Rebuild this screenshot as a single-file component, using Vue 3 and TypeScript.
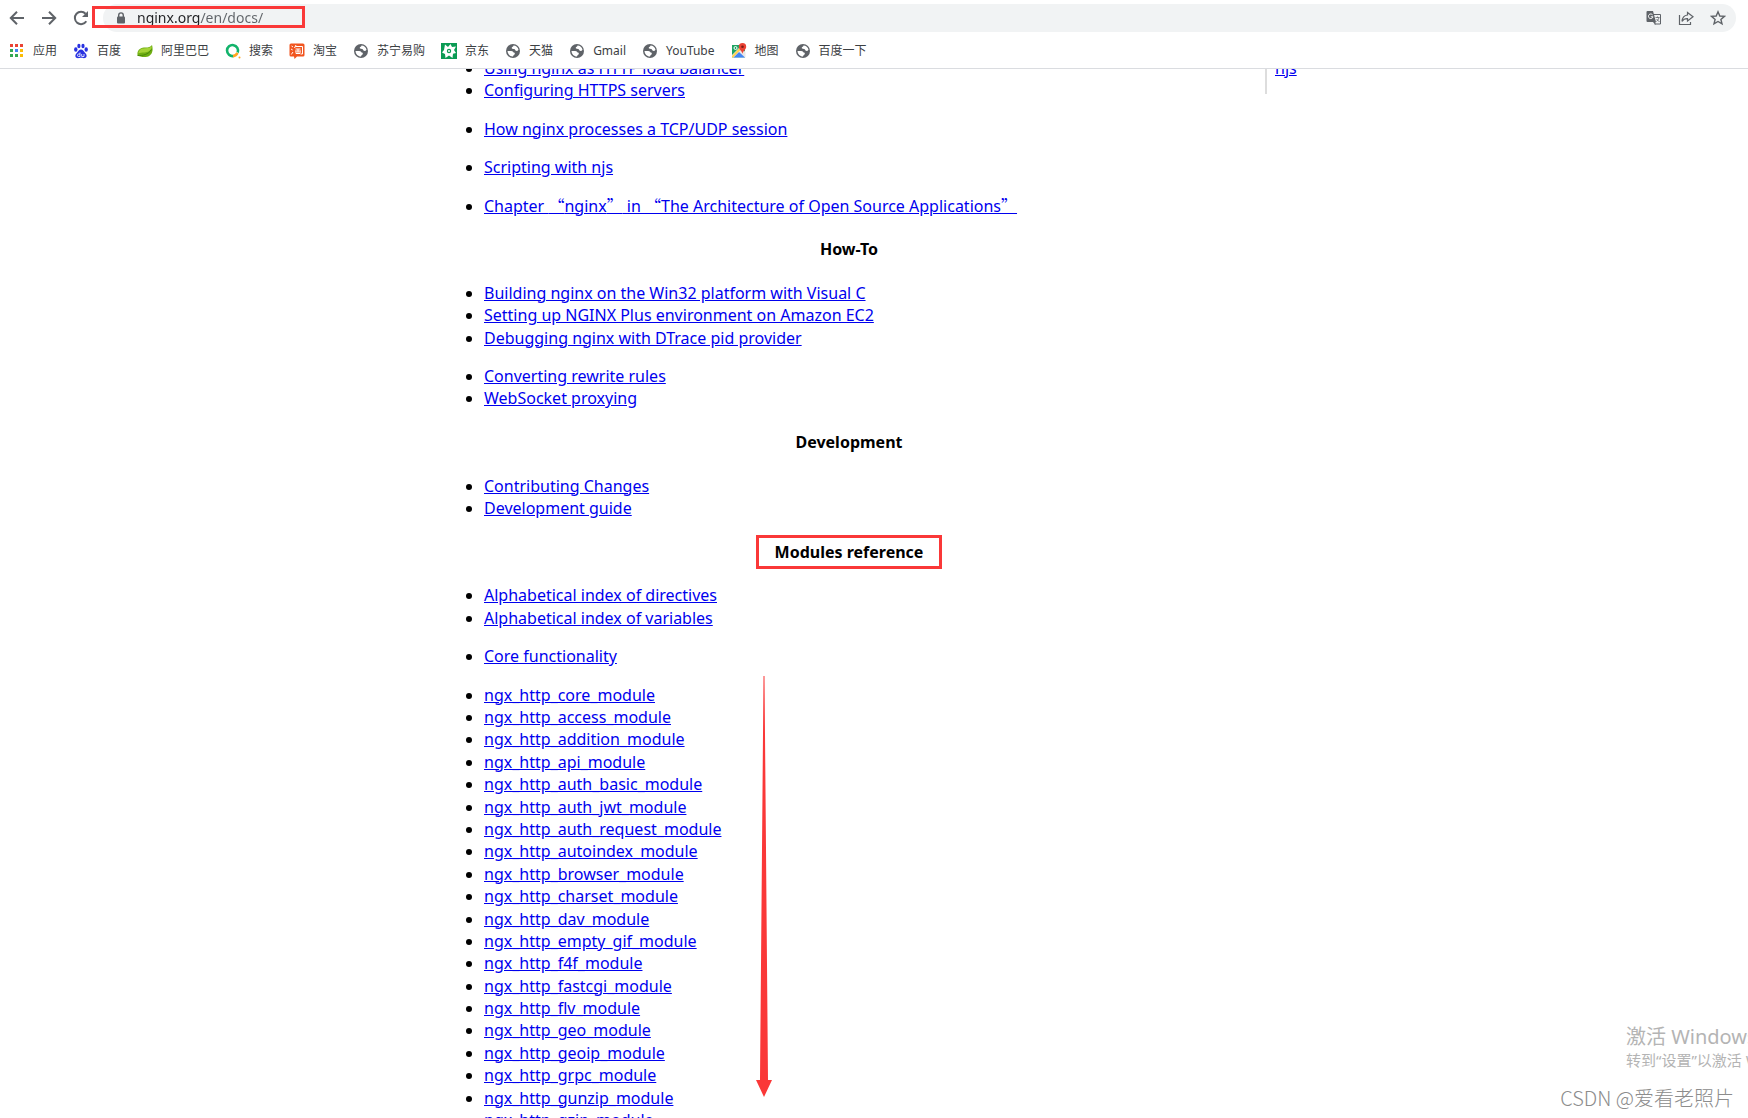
<script setup lang="ts">
import { ref } from 'vue'

interface Bookmark {
  label: string
  icon: 'apps' | 'paw' | 'leaf' | 'search' | 'tao' | 'globe' | 'jd' | 'map'
}

interface Section {
  title: string
  boxed?: boolean
  groups: string[][]
}

const address = ref('nginx.org/en/docs/')

const bookmarks: Bookmark[] = [
  { label: '应用', icon: 'apps' },
  { label: '百度', icon: 'paw' },
  { label: '阿里巴巴', icon: 'leaf' },
  { label: '搜索', icon: 'search' },
  { label: '淘宝', icon: 'tao' },
  { label: '苏宁易购', icon: 'globe' },
  { label: '京东', icon: 'jd' },
  { label: '天猫', icon: 'globe' },
  { label: 'Gmail', icon: 'globe' },
  { label: 'YouTube', icon: 'globe' },
  { label: '地图', icon: 'map' },
  { label: '百度一下', icon: 'globe' },
]

const introGroups: string[][] = [
  ['Using nginx as HTTP load balancer', 'Configuring HTTPS servers'],
  ['How nginx processes a TCP/UDP session'],
  ['Scripting with njs'],
]

const sections: Section[] = [
  {
    title: 'How-To',
    groups: [
      [
        'Building nginx on the Win32 platform with Visual C',
        'Setting up NGINX Plus environment on Amazon EC2',
        'Debugging nginx with DTrace pid provider',
      ],
      ['Converting rewrite rules', 'WebSocket proxying'],
    ],
  },
  {
    title: 'Development',
    groups: [['Contributing Changes', 'Development guide']],
  },
  {
    title: 'Modules reference',
    boxed: true,
    groups: [
      ['Alphabetical index of directives', 'Alphabetical index of variables'],
      ['Core functionality'],
      [
        'core', 'access', 'addition', 'api', 'auth_basic', 'auth_jwt', 'auth_request',
        'autoindex', 'browser', 'charset', 'dav', 'empty_gif', 'f4f', 'fastcgi', 'flv',
        'geo', 'geoip', 'grpc', 'gunzip', 'gzip',
      ].map((name) => `ngx_http_${name}_module`),
    ],
  },
]
</script>

<template>
  <div class="window">
    <header class="chrome">
      <div class="toolbar">
        <button class="nav" type="button" aria-label="Back">
          <svg viewBox="0 0 16 16"><path d="M15 8H2M8 1.800 1.800 8 8 14.200" /></svg>
        </button>
        <button class="nav" type="button" aria-label="Forward">
          <svg viewBox="0 0 16 16"><path d="M1 8h13M8 1.800 14.200 8 8 14.200" /></svg>
        </button>
        <button class="nav" type="button" aria-label="Reload">
          <svg viewBox="0 0 16 16">
            <path d="M13.300 11.300A6.200 6.200 0 1 1 12.600 3.700" />
            <path class="solid" d="M15 1v6H9z" />
          </svg>
        </button>
        <div class="omnibox">
          <svg class="lock" viewBox="0 0 10 12">
            <path d="M2.700 5V3.200a2.300 2.300 0 0 1 4.600 0V5" fill="none" stroke="#5f6368" stroke-width="1.400" />
            <rect x="1" y="4.500" width="8" height="7" rx="1" fill="#5f6368" />
          </svg>
          <input v-model="address" class="address" type="text" aria-label="Address" />
          <button class="tool" type="button" aria-label="Translate">
            <svg viewBox="0 0 16 16">
              <path d="M7 4.500h7.500v9.500H8.500" fill="none" stroke="#5f6368" />
              <path d="M1.500 1h5.500l3 11H1.500a1 1 0 0 1-1-1V2a1 1 0 0 1 1-1z" fill="#5f6368" />
              <path d="M7 12l2.500 3V12z" fill="#5f6368" />
              <path d="M6.600 4.900A2.300 2.300 0 1 0 7 6.800H4.800" fill="none" stroke="#fff" />
              <path d="M9.500 7.500h4M11.500 6.500v1M13 7.500c-.5 2-1.500 3-2.500 4M10.500 9l3 3" fill="none" stroke="#5f6368" stroke-width=".8" />
            </svg>
          </button>
          <button class="tool" type="button" aria-label="Share">
            <svg viewBox="0 0 16 16" fill="none" stroke="#5f6368" stroke-width="1.200">
              <path d="M1.500 5v9.500h11V12" />
              <path d="M9.500 2.500 15 6.800 9.500 11V8.600C7 8.500 5.300 9.300 4 11.300 4.300 7.800 6 5.500 9.500 5z" />
            </svg>
          </button>
          <button class="tool" type="button" aria-label="Bookmark this page">
            <svg viewBox="0 0 16 16" fill="none" stroke="#5f6368" stroke-width="1.400">
              <path d="M8 1.800 9.800 6l4.600.4-3.500 3 1.100 4.500L8 11.500l-4 2.400 1.100-4.500-3.500-3L6.200 6z" />
            </svg>
          </button>
        </div>
        <div class="address-mark"></div>
      </div>
      <nav class="bookmarks">
        <a v-for="item in bookmarks" :key="item.label" href="#" class="bookmark">
          <svg v-if="item.icon === 'apps'" viewBox="0 0 16 16">
            <g fill="#ea4335"><path d="M1 1h3v3H1zM6 1h3v3H6zM11 1h3v3h-3z" /></g>
            <path fill="#34a853" d="M1 6h3v3H1zM1 11h3v3H1z" />
            <path fill="#4285f4" d="M6 6h3v3H6z" />
            <path fill="#fbbc05" d="M11 6h3v3h-3zM11 11h3v3h-3z" />
            <path fill="#34a853" d="M6 11h3v3H6z" />
          </svg>
          <svg v-else-if="item.icon === 'paw'" viewBox="0 0 16 16" fill="#2932e1">
            <ellipse cx="2.800" cy="6.500" rx="1.700" ry="2.200" />
            <ellipse cx="5.900" cy="3" rx="1.600" ry="2.200" />
            <ellipse cx="10" cy="3" rx="1.600" ry="2.200" />
            <ellipse cx="13.200" cy="6.500" rx="1.700" ry="2.200" />
            <path d="M8 6.500c2 0 2.600 1.800 4 3.200 3 2.600 1.500 5.500-1 5.500-1.500 0-2-.4-3-.4s-1.500.4-3 .4c-2.500 0-4-2.900-1-5.500C5.400 8.300 6 6.500 8 6.500z" />
            <path d="M7 9.500v4H5.700a1.200 1.200 0 0 1 0-2.500H7M8.700 11v2.500h2.300V11" fill="none" stroke="#fff" stroke-width=".8" />
          </svg>
          <svg v-else-if="item.icon === 'leaf'" viewBox="0 0 16 16">
            <path d="M.5 12C-.2 6.500 4 4.500 8.500 4.500c3 0 5-.5 6.500-2.500 1.500 5 .5 11.500-6.500 12-3.500.2-6-.5-8-2z" fill="#6fae12" />
            <path d="M1.500 9C3 5.500 6 5.300 9 5.200c2.500 0 4.500-.7 5.700-1.900C15 7 11 9.500 7.500 9.500c-2.500 0-4.500 0-6 1z" fill="#a5d336" />
            <path d="M.5 12.500c5 .5 11-1 14-6" fill="none" stroke="#478708" />
          </svg>
          <svg v-else-if="item.icon === 'search'" viewBox="0 0 16 16" fill="none" stroke-width="2.600">
            <path d="M12.700 9.500A5.500 5.500 0 1 0 8.500 13" stroke="#12b36b" />
            <path d="M8 13.100a5.500 5.500 0 0 0 4.500-3.200" stroke="#ffa51f" />
            <circle cx="14.500" cy="14.500" r="1" fill="#ffa51f" />
          </svg>
          <svg v-else-if="item.icon === 'tao'" viewBox="0 0 16 16">
            <path d="M2 .5h12A1.500 1.500 0 0 1 15.500 2v10a1.500 1.500 0 0 1-1.500 1.500H8L5.500 16 5 13.500H2A1.500 1.500 0 0 1 .5 12V2A1.500 1.500 0 0 1 2 .5z" fill="#f1551f" />
            <path d="M2.500 3l1.500 1M2 6l1.700 1M2.300 11.500 4 9M7 2 5.500 5M6.500 3.500h7v7.500h-2M6.500 6h5M6 8h6M9 6v4.500M7 8.500v2h4v-2" fill="none" stroke="#fff" />
          </svg>
          <svg v-else-if="item.icon === 'jd'" viewBox="0 0 16 16">
            <path d="M0 0h16v16H0z" fill="#0b9b54" />
            <path d="M4 1.500 7 4l2.500-3L11 4l4-.5L13 7l2 3-3 .8L11.500 15 8 12.500 4.500 15 4 11 1 9.500 3 7z" fill="#fff" />
            <circle cx="8" cy="8" r="2.200" fill="#0b9b54" />
            <circle cx="8" cy="8" r="1" fill="#fff" />
          </svg>
          <svg v-else-if="item.icon === 'map'" viewBox="0 0 16 16">
            <path d="M1 2h13v12.500H1z" fill="#1fa463" />
            <path d="M1 12 9 4l5.500 5v5.500H1z" fill="#e8e8e8" />
            <path d="M2.500 14.500 8 9l6 5.500z" fill="#4285f4" />
            <path d="M1 13 8 5.500 9.500 7 2 14.500H1z" fill="#ffd04b" />
            <circle cx="4.500" cy="5" r="1.500" fill="none" stroke="#fff" />
            <path d="M11.500 0a3.700 3.700 0 0 1 3.700 3.700c0 2.500-2.700 3.500-3.700 7-1-3.500-3.700-4.500-3.700-7A3.700 3.700 0 0 1 11.500 0z" fill="#ea4335" />
            <circle cx="11.500" cy="3.800" r="1.300" fill="#7b1d14" />
          </svg>
          <svg v-else viewBox="0 0 16 16">
            <circle cx="8" cy="8" r="7" fill="#5f6368" />
            <path d="M8.500 2.500c2.500 0 4.500 1.800 5 4.200-.8 1.300-2 1.500-3 .8-.7-.6-.2-1.500-1.500-1.500-1.500 0-2.500-.3-2.200-1.400.2-.9 1.700-.8 1.700-2.100zM2.500 8h3.700c1.500 0 2 .8 2.300 1.600.8.1 1.500.4 1.300 1.400-.2.900-1.500.9-1.800 2.500C5 13.500 2.600 11 2.500 8z" fill="#fff" />
          </svg>
          <span>{{ item.label }}</span>
        </a>
      </nav>
    </header>

    <div class="viewport">
      <div class="page">
        <main class="content">
          <ul v-for="(group, i) in introGroups" :key="i">
            <li v-for="text in group" :key="text"><a href="#">{{ text }}</a></li>
          </ul>
          <ul>
            <li>
              <a href="#">Chapter <q>nginx</q> in <q>The Architecture of Open Source Applications</q></a>
            </li>
          </ul>
          <section v-for="section in sections" :key="section.title">
            <h4><span :class="{ boxed: section.boxed }">{{ section.title }}</span></h4>
            <ul v-for="(group, i) in section.groups" :key="i">
              <li v-for="text in group" :key="text"><a href="#">{{ text }}</a></li>
            </ul>
          </section>
          <svg class="arrow" viewBox="0 0 16 421">
            <path d="M7.500 0h1L12 404h4l-8 17-8-17h4z" fill="#fa3838" />
          </svg>
        </main>
        <aside class="menu"><a href="#">njs</a></aside>
      </div>
    </div>

    <div class="activate">
      <p class="activate-title">激活 Windows</p>
      <p class="activate-hint">转到“设置”以激活 Windows。</p>
    </div>
    <p class="credit">CSDN @爱看老照片</p>
  </div>
</template>

<style>
body {
  margin: 0;
  overflow: hidden;
}
</style>

<style scoped>
.window {
  position: relative;
  display: flex;
  flex-direction: column;
  height: 100vh;
  overflow: hidden;
  background: #fff;
  font-family: "Noto Sans", "Noto Sans CJK SC", sans-serif;
}

.chrome {
  flex: none;
  border-bottom: 1px solid #dadce0;
}

.toolbar {
  position: relative;
  display: flex;
  align-items: center;
  height: 28px;
  padding: 4px 12px 0 9px;
}

button {
  display: flex;
  padding: 0;
  border: 0;
  background: none;
}

.nav {
  width: 16px;
  height: 16px;
  margin-right: 16px;
}

.nav:nth-of-type(3) {
  margin-right: 14px;
}

.nav svg {
  width: 16px;
  height: 16px;
  fill: none;
  stroke: #5f6368;
  stroke-width: 2;
}

.nav .solid {
  fill: #5f6368;
  stroke: none;
}

.omnibox {
  display: flex;
  flex: 1;
  align-items: center;
  height: 28px;
  padding: 0 10px 0 13px;
  border-radius: 14px;
  background: #f1f3f4;
}

.lock {
  width: 10px;
  height: 12px;
}

.address {
  flex: 1;
  min-width: 0;
  margin-left: 11px;
  padding: 0;
  border: 0;
  outline: 0;
  background: linear-gradient(90deg, #202124 64px, #5f6368 64px);
  background-clip: text;
  -webkit-background-clip: text;
  color: transparent;
  font: 14px/20px "Noto Sans", sans-serif;
}

.tool {
  margin-left: 16px;
}

.tool svg {
  width: 16px;
  height: 16px;
}

.address-mark {
  position: absolute;
  top: 6px;
  left: 92px;
  box-sizing: border-box;
  width: 213px;
  height: 22px;
  border: 3px solid #fa3838;
}

.bookmarks {
  display: flex;
  gap: 16px;
  height: 34px;
  padding: 2px 0 0 9px;
}

.bookmark {
  display: flex;
  gap: 8px;
  align-items: center;
  color: #3c4043;
  font-size: 12px;
  line-height: 16px;
  white-space: nowrap;
  text-decoration: none;
}

.bookmark svg {
  width: 16px;
  height: 16px;
}

.viewport {
  flex: 1;
  min-height: 0;
  overflow: hidden;
}

.page {
  display: flex;
  gap: 11px;
  align-items: flex-start;
  max-width: 860px;
  margin: -12px auto 0;
  font-size: 16px;
  line-height: 1.4;
}

.content {
  position: relative;
  flex: 1;
}

ul {
  margin: 0 0 16px;
  padding-left: 40px;
}

.page a {
  color: #00e;
  text-decoration: underline;
}

q {
  quotes: "“" "”";
}

q::before,
q::after {
  font-family: "Noto Sans CJK SC", sans-serif;
  line-height: 0;
}

h4 {
  text-align: center;
  font-size: 16px;
  font-weight: 700;
}

.boxed {
  padding: 3px 16px;
  border: 3px solid #fa3838;
}

.menu {
  box-sizing: border-box;
  width: 39px;
  height: 37px;
  padding-left: 8px;
  border-left: 2px solid #ddd;
}

.arrow {
  position: absolute;
  top: 619px;
  left: 312px;
  width: 16px;
  height: 421px;
}

.activate {
  position: absolute;
  right: 0;
  bottom: 48px;
  width: 122px;
  overflow: hidden;
  color: #b4b4b4;
  white-space: nowrap;
}

.activate p {
  margin: 0;
}

.activate-title {
  font-size: 20px;
  line-height: 26px;
}

.activate-hint {
  font-size: 15px;
  line-height: 20px;
}

.credit {
  position: absolute;
  right: 14px;
  bottom: 6px;
  margin: 0;
  color: #8c8c8c;
  font: 300 20px/28px "Noto Sans CJK SC", sans-serif;
  white-space: nowrap;
}
</style>
